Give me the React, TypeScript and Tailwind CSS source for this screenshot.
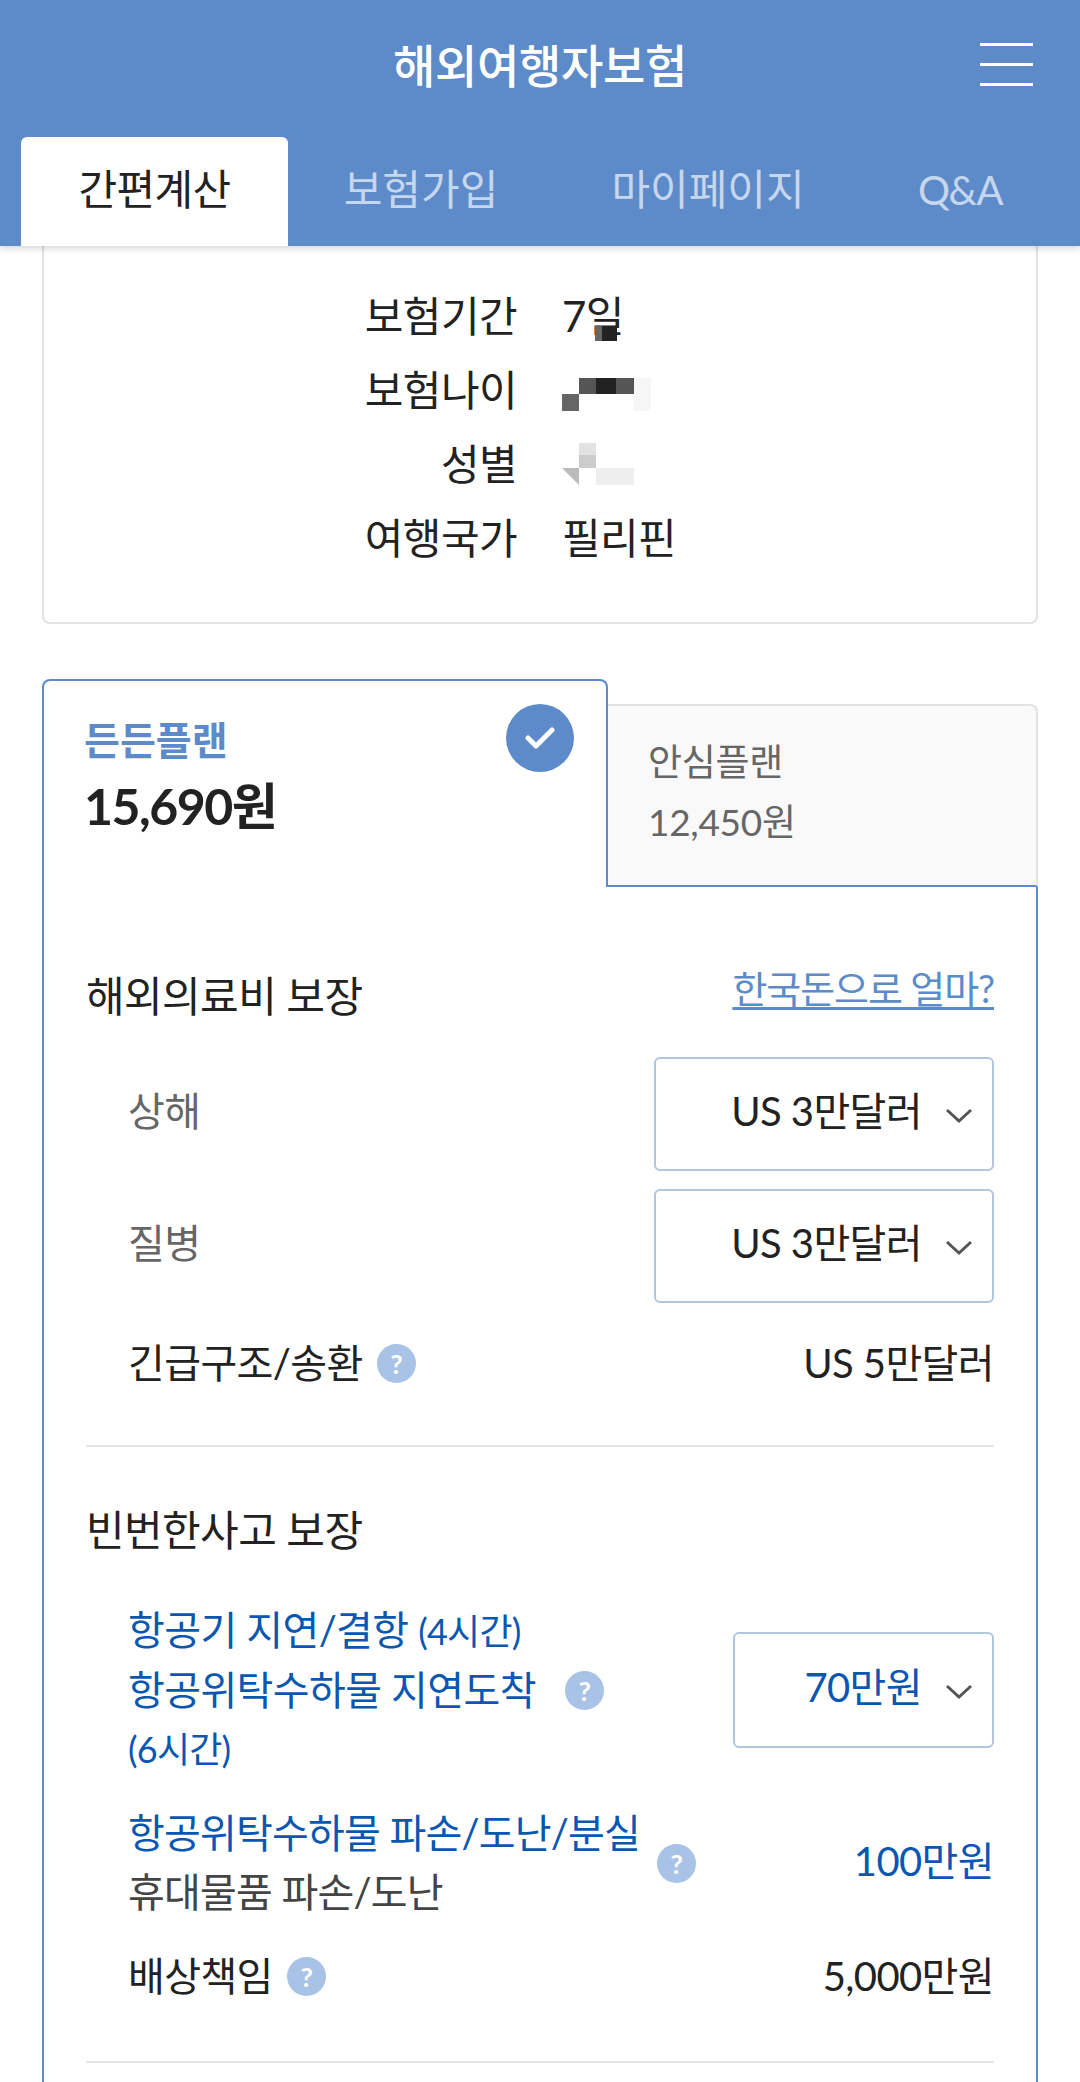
import React from "react";

const Help = ({ className = "" }: { className?: string }) => (
  <span className={"flex h-[39px] w-[39px] shrink-0 items-center justify-center rounded-full bg-[#a9c3e6] text-[27px] leading-none font-bold text-white " + className}>?</span>
);

const Chevron = () => (
  <svg width="30" height="17" viewBox="0 0 30 17" fill="none" className="ml-[22px] mt-[8px] shrink-0">
    <path d="M3 3L15 14L27 3" stroke="#555" strokeWidth="3" />
  </svg>
);

const Select = ({ value, w, blue }: { value: string; w: string; blue?: boolean }) => (
  <div className={"flex items-center justify-end rounded-[6px] border-2 border-[#b0c5df] pr-[18px] pb-[6px] " + w + (blue ? " h-[116px] text-[#0a57b2]" : " h-[114px] text-[#222]")}>
    <span>{value}</span>
    <Chevron />
  </div>
);

const Row = ({ label, children }: { label: string; children: React.ReactNode }) => (
  <div className="flex h-[74px] items-center">
    <div className="w-[473px] text-right">{label}</div>
    <div className="relative ml-[45px] flex items-center">{children}</div>
  </div>
);

const App = () => {
  return (
    <div className="h-[2082px] overflow-hidden bg-white text-[42px] tracking-[-0.6px] text-[#222] [font-family:Lato,'Noto_Sans_CJK_KR',sans-serif]">
      <header className="relative z-10 h-[246px] bg-[#5d8bc9] shadow-[0_3px_6px_rgba(0,0,0,0.15)]">
        <div className="relative flex h-[137px] justify-center pt-[36px]">
          <h1 className="text-[46px] leading-[60px] font-medium tracking-[-0.3px] text-white">해외여행자보험</h1>
          <div className="absolute top-[43px] right-[47px] flex w-[53px] flex-col gap-[17px]">
            <span className="h-[3px] bg-white" />
            <span className="h-[3px] bg-white" />
            <span className="h-[3px] bg-white" />
          </div>
        </div>
        <nav className="flex h-[109px] pl-[21px] text-[#c6d6ec]">
          <div className="flex w-[267px] items-center justify-center rounded-t-[6px] bg-white pb-[4px] text-[#222]">간편계산</div>
          <div className="flex w-[266px] items-center justify-center pb-[4px] tracking-normal">보험가입</div>
          <div className="flex w-[308px] items-center justify-center pb-[4px] tracking-normal">마이페이지</div>
          <div className="flex w-[196px] items-center justify-center pb-[4px] text-[40px] tracking-[-1.5px]">Q&amp;A</div>
        </nav>
      </header>

      <section className="mx-[42px] h-[378px] rounded-b-[8px] border-x-2 border-b-2 border-[#e2e2e2] pt-[33px]">
        <Row label="보험기간">
          <span>7일</span>
          <svg width="22" height="15" className="absolute top-[41px] left-[33px] blur-[0.5px]"><rect width="22" height="15" fill="#222" /><rect width="7" height="15" fill="#666" /></svg>
        </Row>
        <Row label="보험나이">
          <svg width="89" height="33" className="mt-[8px] blur-[0.5px]"><rect x="17" width="55" height="16" fill="#555" /><rect x="34" width="20" height="16" fill="#222" /><rect y="16" width="17" height="17" fill="#666" /><rect x="72" width="17" height="33" fill="#f6f6f6" /></svg>
        </Row>
        <Row label="성별">
          <svg width="72" height="42" className="blur-[0.5px]"><rect x="17" width="17" height="12" fill="#e2e2e2" /><rect x="17" y="12" width="17" height="13" fill="#ccc" /><path d="M0 25H17V42Z" fill="#bbb" /><rect x="34" y="25" width="38" height="17" fill="#eee" /></svg>
        </Row>
        <Row label="여행국가">
          <span>필리핀</span>
        </Row>
      </section>

      <section className="mx-[42px] mt-[55px]">
        <div className="flex items-end">
          <div className="relative h-[208px] w-[566px] rounded-t-[8px] border-x-2 border-t-2 border-[#5d8bc9] pt-[32px] pl-[40px]">
            <div className="text-[39px] leading-[54px] font-bold tracking-normal text-[#5d8bc9]">든든플랜</div>
            <div className="mt-[8px] text-[50px] leading-[62px] font-bold tracking-[-1.5px]">15,690원</div>
            <span className="absolute top-[23px] right-[32px] flex h-[68px] w-[68px] items-center justify-center rounded-full bg-[#5d8bc9]">
              <svg width="30" height="24" viewBox="0 0 30 24" fill="none"><path d="M3 12L11 20L27 4" stroke="#fff" strokeWidth="5" strokeLinecap="round" strokeLinejoin="round" /></svg>
            </span>
          </div>
          <div className="h-[183px] flex-1 rounded-tr-[8px] border-t-2 border-r-2 border-b-2 border-t-[#e2e2e2] border-r-[#e2e2e2] border-b-[#5d8bc9] bg-[#f9f9f9] pt-[29px] pl-[40px] text-[37px] leading-[54px] tracking-[-0.3px] text-[#666]">
            <div>안심플랜</div>
            <div className="mt-[6px]">12,450원</div>
          </div>
        </div>

        <div className="h-[1200px] border-x-2 border-[#5d8bc9] px-[42px] pt-[79px]">
          <div className="flex h-[60px] items-center justify-between">
            <span>해외의료비 보장</span>
            <a className="mb-[16px] text-[38px] tracking-[-1.1px] text-[#5d8bc9] underline underline-offset-[4px]">한국돈으로 얼마?</a>
          </div>
          <div className="text-[40px]">
            <div className="mt-[31px] flex items-center justify-between pl-[42px]">
              <span className="mb-[6px] text-[#666]">상해</span>
              <Select value="US 3만달러" w="w-[340px]" />
            </div>
            <div className="mt-[18px] flex items-center justify-between pl-[42px]">
              <span className="mb-[6px] text-[#666]">질병</span>
              <Select value="US 3만달러" w="w-[340px]" />
            </div>
            <div className="mt-[30px] flex h-[60px] items-center justify-between pl-[42px]">
              <span className="flex items-center gap-[14px]">긴급구조/송환<Help /></span>
              <span>US 5만달러</span>
            </div>
          </div>
          <div className="mt-[52px] h-[2px] bg-[#e4e4e4]" />

          <div className="mt-[53px] flex h-[60px] items-center">빈번한사고 보장</div>
          <div className="text-[40px]">
            <div className="mt-[41px] flex items-center justify-between pl-[42px] text-[#0a57b2]">
              <div className="leading-[59px]">
                <div>항공기 지연/결항 <span className="text-[36px] tracking-[-0.8px]">(4시간)</span></div>
                <div className="flex items-center">항공위탁수하물 지연도착<Help className="ml-[29px]" /></div>
                <div className="text-[36px] tracking-[-0.8px]">(6시간)</div>
              </div>
              <Select value="70만원" w="w-[261px]" blue />
            </div>
            <div className="mt-[25px] flex items-center justify-between pl-[42px]">
              <div className="flex items-center">
                <div className="leading-[59px]">
                  <div className="tracking-[-0.8px] text-[#0a57b2]">항공위탁수하물 파손/도난/분실</div>
                  <div className="tracking-[-0.8px] text-[#444]">휴대물품 파손/도난</div>
                </div>
                <Help className="ml-[17px]" />
              </div>
              <span className="mb-[4px] text-[#0a57b2]">100만원</span>
            </div>
            <div className="mt-[24px] flex h-[60px] items-center justify-between pl-[42px]">
              <span className="flex items-center gap-[14px]">배상책임<Help /></span>
              <span>5,000만원</span>
            </div>
          </div>
          <div className="mt-[55px] h-[2px] bg-[#e4e4e4]" />
        </div>
      </section>
    </div>
  );
};

export default App;
